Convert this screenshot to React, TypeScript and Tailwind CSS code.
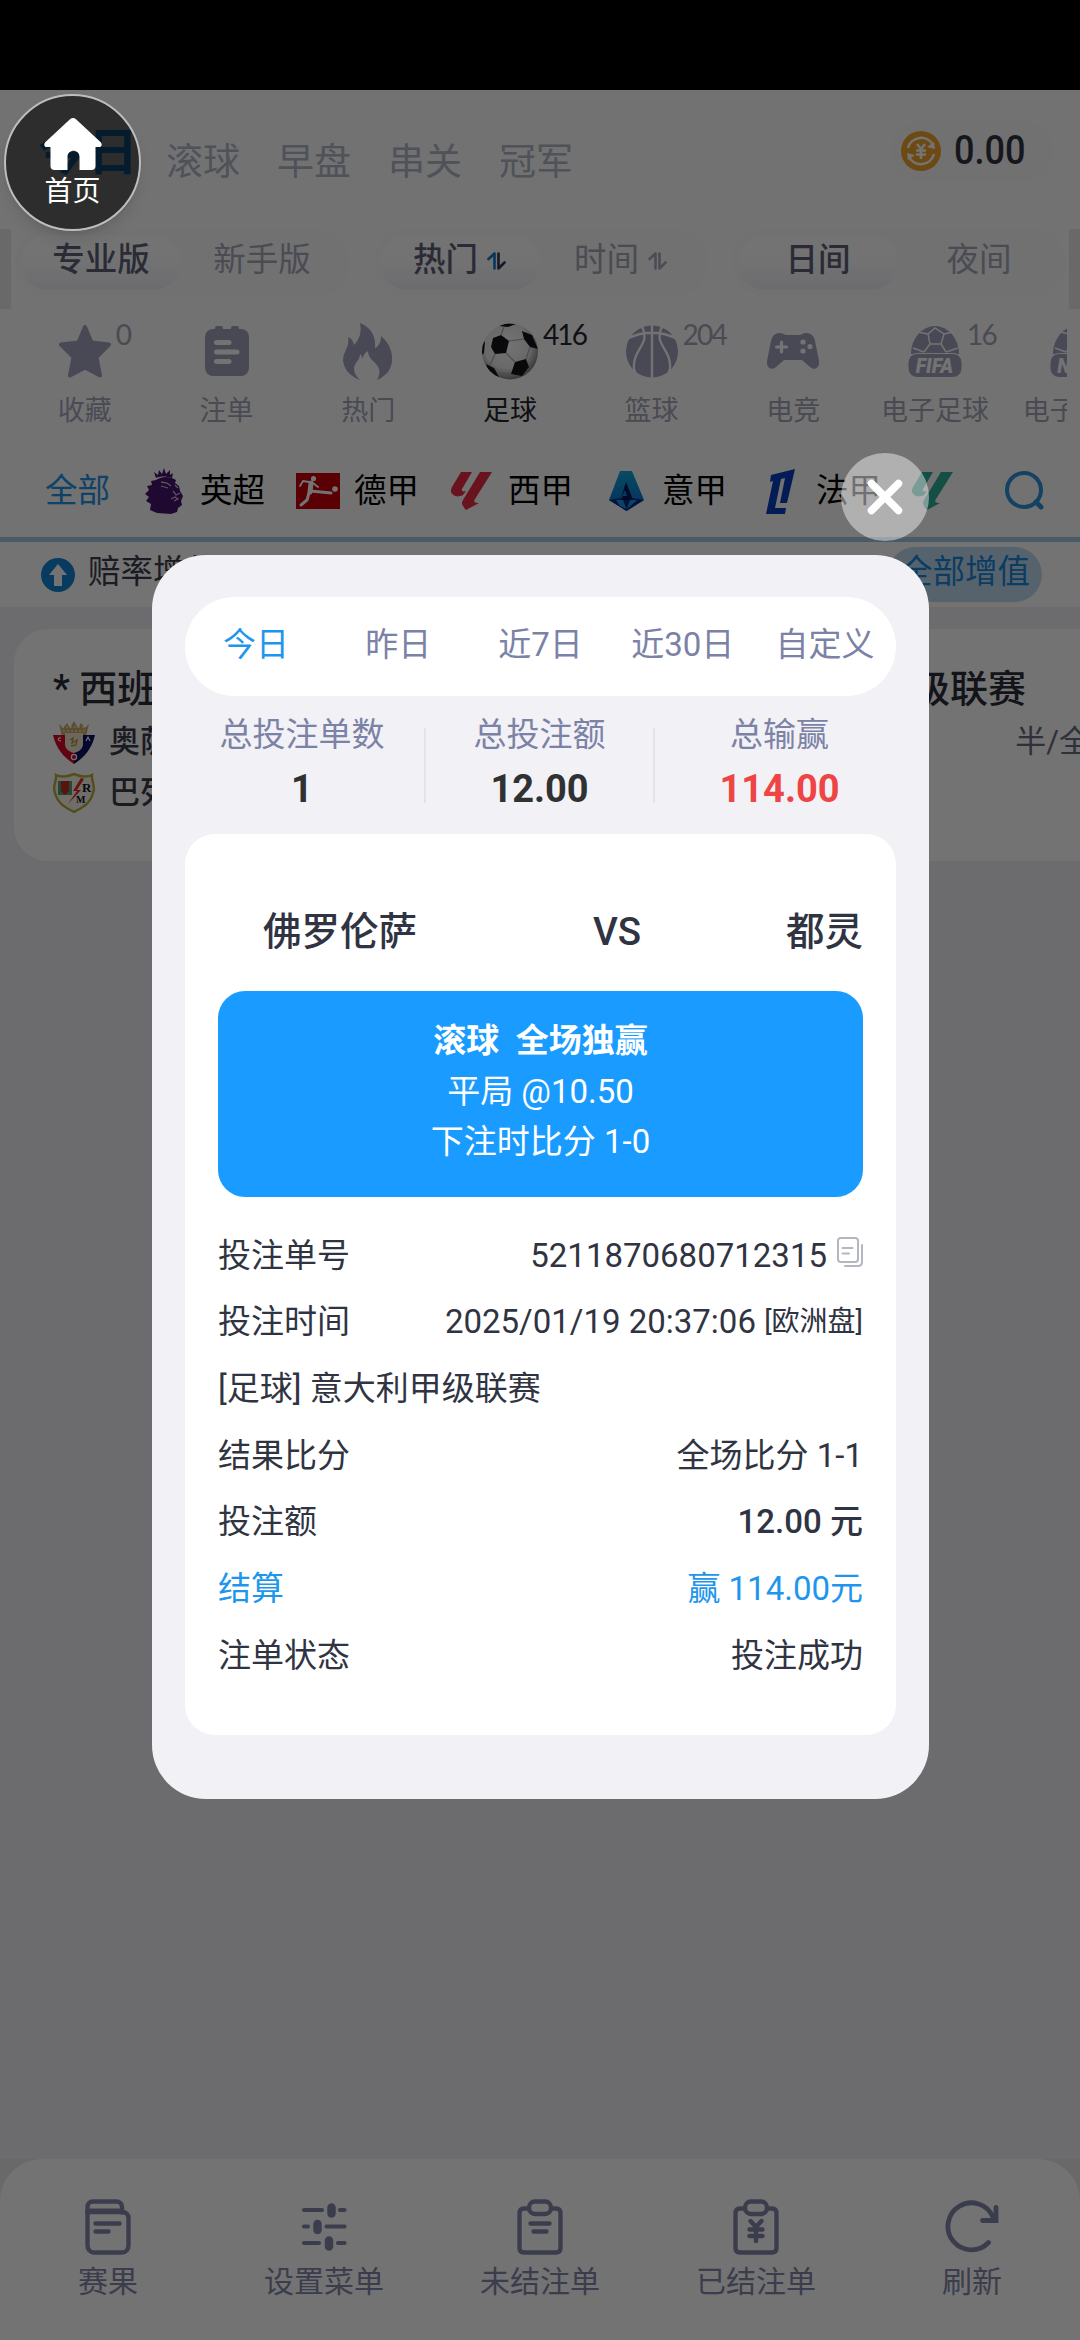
import React from 'react';
import clsx from 'clsx';

interface Sport {
  name: string;
  count?: string;
  active?: boolean;
  icon: React.ReactNode;
}

interface League {
  name: string;
  icon: React.ReactNode;
}

const StarIcon = () => (
  <svg width="52" height="54" viewBox="0 0 52 54" fill="#a0a2bb" stroke="#a0a2bb" strokeWidth="4" strokeLinejoin="round">
    <path d="M26 3 L32.5 18.5 L50 20.5 L37.5 33 L41 51.5 L26 43.5 L11 51.5 L14.5 33 L2 20.5 L19.5 18.5 Z" />
  </svg>
);

const NoteIcon = () => (
  <svg width="44" height="50" viewBox="0 0 44 50">
    <rect x="0" y="3" width="44" height="47" rx="8" fill="#a0a2bb" />
    <rect x="10" y="0" width="8" height="8" rx="2" fill="#a0a2bb" />
    <rect x="26" y="0" width="8" height="8" rx="2" fill="#a0a2bb" />
    <path d="M11.500 16.500 H24 M11.500 26 H32 M11.500 35.500 H24" stroke="#fff" strokeWidth="5" strokeLinecap="round" />
  </svg>
);

const FlameIcon = () => (
  <svg width="50" height="57" viewBox="0 0 50 57" fill="#a0a2bb">
    <path d="M17 0 C29 5 33 14 32 25 C36 23 38 19 38 13 C46 20 50 29 49 38 C48 47 43 53 34 57 C39 49 36 43 30 38 C27 35 25 32 25 28 C20 31 20 34 20 38 C20 35 19 33 17 31 C17 37 12 39 11 45 C11 50 13 53 17 57 C7 53 1 47 0 37 C0 28 7 25 5 14 C9 16 10 18 11 22 C16 17 19 10 17 0 Z" />
  </svg>
);

const SoccerIcon = () => (
  <svg width="56" height="57" viewBox="0 0 56 57">
    <defs>
      <radialGradient id="ball" cx="0.45" cy="0.4" r="0.62">
        <stop offset="0" stopColor="#fff" />
        <stop offset="0.65" stopColor="#e9e9e9" />
        <stop offset="1" stopColor="#777" />
      </radialGradient>
      <clipPath id="ballClip">
        <circle cx="28" cy="28.500" r="28" />
      </clipPath>
    </defs>
    <circle cx="28" cy="28.500" r="28" fill="url(#ball)" />
    <g clipPath="url(#ballClip)" fill="#15151a">
      <path d="M11 15 L19 12 L27 18 L24 30 L13 31 L9 24 Z" />
      <path d="M40 8 L50 12 L56 26 L48 24 L42 16 Z" />
      <path d="M33 39 L44 36 L47 44 L40 53 L29 51 Z" />
      <path d="M4 41 L12 45 L17 54 L8 52 Z" />
      <path d="M17 3 L25 0 L34 1 L26 4 Z" />
      <path d="M0 22 L3 18 L2 30 L0 32 Z" />
      <g stroke="#a9a9a9" strokeWidth="1.200" fill="none">
        <path d="M27 18 L42 16 M24 30 L33 39 M13 31 L8 42 M19 12 L22 4 M48 24 L44 36 M17 50 L29 51" />
      </g>
    </g>
  </svg>
);

const BasketballIcon = () => (
  <svg width="52" height="53" viewBox="0 0 52 53">
    <circle cx="26" cy="26.500" r="26" fill="#a0a2bb" />
    <path
      d="M26 0 V53 M15 0 C19 6 19 10 18 15 C15 25 7 29 8 44 L11 52 M37 0 C33 6 33 10 34 15 C37 25 45 29 44 44 L41 52 M3 13 C17 6 35 6 49 13"
      stroke="#fff"
      strokeWidth="2.400"
      fill="none"
    />
  </svg>
);

const GamepadIcon = () => (
  <svg width="52" height="36" viewBox="0 0 52 36">
    <path
      d="M13 0 C16 0 17 2 20 2 H32 C35 2 36 0 39 0 C44 0 47 3 48 8 L52 28 C53 35 47 38 43 34 L35 27 H17 L9 34 C5 38 -1 35 0 28 L4 8 C5 3 8 0 13 0 Z"
      fill="#a0a2bb"
    />
    <path d="M14.500 9 V19 M9.500 14 H19.500" stroke="#fff" strokeWidth="3.200" strokeLinecap="round" />
    <g fill="#fff">
      <circle cx="36" cy="9" r="2.600" />
      <circle cx="43" cy="13.500" r="2.600" />
      <circle cx="36" cy="18" r="2.600" />
    </g>
  </svg>
);

const FifaIcon = ({ label = 'FIFA' }: { label?: string }) => (
  <svg width="54" height="54" viewBox="0 0 54 54">
    <path d="M3 30 A24 28 0 0 1 51 30 Z" fill="#a0a2bb" />
    <path
      d="M27 4 L20 10 L22 20 H33 L36 10 Z M20 10 L10 8 M36 10 L45 8 M22 20 L16 28 M33 20 L38 28 M16 28 L5 24 M38 28 L50 24"
      stroke="#fff"
      strokeWidth="1.500"
      fill="none"
    />
    <rect x="0" y="29.500" width="54" height="24" rx="9" fill="#a0a2bb" stroke="#fff" strokeWidth="1" />
    <text x="26.500" y="48.500" textAnchor="middle" fontSize="19.500" fontWeight="900" fontStyle="italic" fill="#fff" className="font-[Roboto]">
      {label}
    </text>
  </svg>
);

const sports: Sport[] = [
  { name: '收藏', count: '0', icon: <StarIcon /> },
  { name: '注单', icon: <NoteIcon /> },
  { name: '热门', icon: <FlameIcon /> },
  { name: '足球', count: '416', active: true, icon: <SoccerIcon /> },
  { name: '篮球', count: '204', icon: <BasketballIcon /> },
  { name: '电竞', icon: <GamepadIcon /> },
  { name: '电子足球', count: '16', icon: <FifaIcon /> },
  { name: '电子篮球', icon: <FifaIcon label="NBA" /> },
];

const LionLogo = () => (
  <svg width="38" height="47" viewBox="0 0 38 47">
    <g fill="#48156e">
      <path d="M9 4 L13 7 L14 2 L17 6 L19 0 L21 6 L25 2 L25 7 L28 5 L27 10 C21 8 15 8 11 10 Z" />
      <path d="M11 12 C17 8 25 8 31 12 L30 15 L34 18 L35 23 L38 28 L36 33 L37 37 L33 40 L32 44 L26 46 L12 45 L5 42 L6 36 L1 33 L4 29 L0 26 L4 22 L2 18 L7 17 L6 13 Z" />
    </g>
    <path
      d="M16 14 L22 15 L26 18 M16 18 L23 20 M30 17 L33 20 M28 23 L31 27 L35 25 M26 31 L30 29 L33 31 L29 33"
      stroke="#c9bcd2"
      strokeWidth="1.300"
      fill="none"
    />
  </svg>
);

const BundesLogo = () => (
  <svg width="44" height="36" viewBox="0 0 44 36">
    <rect width="44" height="36" fill="#c8000b" />
    <g fill="none" stroke="#fff" strokeLinecap="round" strokeLinejoin="round">
      <path d="M15 10 L14 19" strokeWidth="5" />
      <path d="M14 18 L25 19 L35 20" strokeWidth="3" />
      <path d="M13 20 L11 27 L5 32" strokeWidth="3" />
      <path d="M13 9 L7 8 L4 13 M17 10 L22 14" strokeWidth="1.800" />
    </g>
    <circle cx="17.500" cy="5.500" r="2.600" fill="#fff" />
    <circle cx="39" cy="16" r="2.800" fill="#fff" />
  </svg>
);

const LaligaLogo = ({ color }: { color: string }) => (
  <svg width="42" height="38" viewBox="0 0 42 38" fill={color}>
    <path d="M10 0 H21 L11 17 C10 19 12 20 15 19 L12 23 C6 26 2 24 0 20 C0 18 0 17 1 15 Z" />
    <path d="M29 0 H41 L24 27 C22 30 24 31 28 31 L15 38 C13 36 12 34 11 32 C11 31 11 30 12 28 Z" />
  </svg>
);

const SerieALogo = () => (
  <svg width="35" height="40" viewBox="0 0 35 40">
    <defs>
      <linearGradient id="serie" x1="0" y1="0" x2="0" y2="1">
        <stop offset="0" stopColor="#14a5dc" />
        <stop offset="1" stopColor="#0869c8" />
      </linearGradient>
    </defs>
    <path d="M11 0 H23 L35 29 L17.500 40 L0 29 Z" fill="url(#serie)" />
    <path d="M0 29 L17.500 26 L35 29 L17.500 40 Z" fill="#0b2c86" />
    <path d="M7 29 L14 29 L17.500 38 L11 35 Z M21 29 H28 L18 38 Z" fill="#1a93e0" />
    <path d="M17 11 L24 29 H12 L14 25 H18 L16 19 L12 27 Z" fill="#06175a" />
  </svg>
);

const Ligue1Logo = () => (
  <svg width="29" height="45" viewBox="0 0 29 45" fill="#0a3fbe">
    <path d="M5 6 L29 0 L21 34 H14 L19 9 L15 10 L9 39 H20 L19 45 H0 L7 12 L4 13 Z" />
  </svg>
);

const leagues: League[] = [
  { name: '英超', icon: <LionLogo /> },
  { name: '德甲', icon: <BundesLogo /> },
  { name: '西甲', icon: <LaligaLogo color="#e82c44" /> },
  { name: '意甲', icon: <SerieALogo /> },
  { name: '法甲', icon: <Ligue1Logo /> },
];

const SortIcon = ({ active }: { active?: boolean }) => (
  <svg width="19" height="18" viewBox="0 0 19 18" fill="none" strokeWidth="2.600" strokeLinecap="round" strokeLinejoin="round" className="mt-[3px]">
    <path d="M1.500 7 L7.500 1.500 V16.500" stroke={active ? '#1478c8' : '#a9abba'} />
    <path d="M11.500 1.500 V16.500 L17.500 10.500" stroke={active ? '#33375a' : '#a9abba'} />
  </svg>
);

interface SegmentProps {
  on: string;
  off: string;
  sortable?: boolean;
}

const Segment: React.FC<SegmentProps> = ({ on, off, sortable }) => (
  <div className="flex h-[68px] w-[334px] rounded-full bg-[#fafafa] p-[6px] text-[32.500px] leading-[52px]">
    <div className="flex h-[55px] w-[160px] items-center justify-center gap-[9px] rounded-full bg-linear-to-b from-white via-[#fdfdff] to-[#eeeff6] pb-[6px] font-medium text-[#5f6078]">
      {on}
      {sortable && <SortIcon active />}
    </div>
    <div className="flex h-[55px] flex-1 items-center justify-center gap-[9px] pb-[6px] text-[#a4a7b8]">
      {off}
      {sortable && <SortIcon />}
    </div>
  </div>
);

const OsasunaCrest = () => (
  <svg width="42" height="43" viewBox="0 0 42 43">
    <path d="M6 3 L10 7 L14 2 L17 7 L21 0 L25 7 L28 2 L32 7 L36 3 L33 15 H9 Z" fill="#c9ad62" />
    <path d="M9 6 L33 6 M10 10 L32 10" stroke="#fff" strokeWidth="1" strokeDasharray="2 2" />
    <path d="M0 14 H21 V43 C10 36 3 27 0 14 Z" fill="#d80a24" />
    <path d="M42 14 H21 V43 C32 36 39 27 42 14 Z" fill="#0c1162" />
    <path d="M12 12 H30 V24 C29 29 25 31 21 32 C17 31 13 29 12 24 Z" fill="#efe6d2" />
    <path d="M17 19 L20 17 L19 22 L24 19 L23 24 L18 25" stroke="#c09346" strokeWidth="1.400" fill="none" />
    <path d="M8 17 C5 16 4 20 8 20 M33 20 L35 16 L37 20" stroke="#fff" strokeWidth="1.200" fill="none" />
    <circle cx="21" cy="36" r="2.600" fill="#d80a24" stroke="#fff" strokeWidth="1.200" />
  </svg>
);

const RayoCrest = () => (
  <svg width="42" height="40" viewBox="0 0 42 40">
    <path d="M3 2 C9 5 15 3 21 1 C27 3 33 5 39 2 C38 8 43 13 40 20 C37 31 30 34 21 39 C12 34 5 31 2 20 C-1 13 4 8 3 2 Z" fill="#f6f3e8" stroke="#b5aa3c" strokeWidth="2.400" />
    <rect x="5" y="8" width="14" height="14" fill="#549c7a" />
    <path d="M8 8 H16 V18 L12 22 L8 18 Z" fill="#c02f1e" />
    <path d="M28 5 L20 18 L24 18 L15 31 L28 17 L24 17 L31 6 Z" fill="#e22a28" />
    <text x="29" y="19" fontSize="13" fontWeight="700" fill="#15151a" className="font-['Liberation_Serif']">R</text>
    <text x="23" y="30" fontSize="10" fontWeight="700" fill="#15151a" className="font-['Liberation_Serif']">M</text>
  </svg>
);

const ResultIcon = () => (
  <svg width="46" height="56" viewBox="0 0 46 56" fill="none" stroke="#8388ac" strokeWidth="4.400" strokeLinecap="round">
    <path d="M2.500 14 V8 C2.500 4.500 5 2.500 8 2.500 H31 C35 2.500 37 5 37 8 V13.500" />
    <path d="M3 13 H37 C41 13 43.500 15.500 43.500 19 V46 C43.500 50.500 41 53.500 37 53.500 H9 C5 53.500 2.500 50.500 2.500 46 V13" />
    <path d="M10.500 24.500 H34.500 M10.500 32.500 H23.500" />
    <path d="M3 12 H37" strokeWidth="5" />
  </svg>
);

const SettingsIcon = () => (
  <svg width="46" height="56" viewBox="0 0 46 56" stroke="#8388ac" strokeLinecap="round">
    <path d="M3 11 H21 M39 11 H43.500 M3 27.500 H7 M25.500 27.500 H43.500 M3 44 H18 M37 44 H43.500" strokeWidth="4.200" />
    <path d="M30.500 8.500 V14.500 M16.500 25 V31 M28 41.500 V47.500" strokeWidth="8.500" />
  </svg>
);

const ClipboardIcon = ({ yen }: { yen?: boolean }) => (
  <svg width="46" height="56" viewBox="0 0 46 56" fill="none" stroke="#8388ac" strokeWidth="4.400" strokeLinecap="round" strokeLinejoin="round">
    <path d="M12 9.500 H7 C4 9.500 2.500 11 2.500 14 V49 C2.500 52 4 53.500 7 53.500 H39 C42 53.500 43.500 52 43.500 49 V14 C43.500 11 42 9.500 39 9.500 H34" />
    <rect x="12" y="2.500" width="22" height="12.500" rx="6" />
    {yen ? <path d="M17.500 22 L23 28 L28.500 22 M16.500 30.500 H29.500 M16.500 37 H29.500 M23 28 V42" /> : <path d="M13.500 24.500 H32.500 M16.500 32.500 H29.500" />}
  </svg>
);

const RefreshIcon = () => (
  <svg width="54" height="56" viewBox="0 0 54 56" fill="none" stroke="#8388ac" strokeWidth="4.800" strokeLinecap="round">
    <path d="M43.500 43.500 A23.500 23.500 0 1 1 48 18" />
    <path d="M51 8.500 V21.500 H37.500" />
  </svg>
);

const footerItems = [
  { name: '赛果', icon: <ResultIcon /> },
  { name: '设置菜单', icon: <SettingsIcon /> },
  { name: '未结注单', icon: <ClipboardIcon /> },
  { name: '已结注单', icon: <ClipboardIcon yen /> },
  { name: '刷新', icon: <RefreshIcon /> },
];

const CopyIcon = () => (
  <svg width="26" height="30" viewBox="0 0 26 30" fill="none" stroke="#b4b6c0" strokeWidth="2" strokeLinecap="round">
    <rect x="1" y="1" width="20" height="24" rx="3" />
    <path d="M25 8 V25 C25 27.500 24 29 21 29 H8 M5.500 11 H15.500 M5.500 16.500 H12" />
  </svg>
);

const Header = () => (
  <header className="flex h-[139px] items-center justify-between pr-[27px] pl-[38px]">
    <nav className="flex items-center gap-[37px] pt-[7px] text-[37px] text-[#b2b5c6]">
      <span className="mr-[-9px] -mt-[20px] text-[50px] font-bold text-[#179cff]">今日</span>
      <span>滚球</span>
      <span>早盘</span>
      <span>串关</span>
      <span>冠军</span>
    </nav>
    <div className="mb-[17px] flex h-[60px] w-[162px] items-center gap-[13px] rounded-full bg-[#fafafa] pl-[10px]">
      <svg width="40" height="40" viewBox="0 0 40 40">
        <circle cx="20" cy="20" r="20" fill="#f2a42c" />
        <path d="M7 17 A13.500 13.500 0 0 1 32 14 M33 23 A13.500 13.500 0 0 1 8 26" stroke="#fff" strokeWidth="2.600" fill="none" />
        <path d="M34 18 L26 16 L33 11 Z M6 22 L14 24 L7 29 Z" fill="#fff" />
        <path d="M16 13 L20 18 L24 13 M15 19.500 H25 M15 23.500 H25 M20 18 V28" stroke="#fff" strokeWidth="2.600" fill="none" />
      </svg>
      <span className="origin-left scale-x-[0.88] text-[41px] font-medium text-[#303442]">0.00</span>
    </div>
  </header>
);

const SportsBar = () => (
  <div className="mr-[13px] ml-[14px] flex h-[118px] overflow-hidden pt-[3px]">
    {sports.map((sport) => (
      <div
        key={sport.name}
        className={clsx('flex w-[141.700px] shrink-0 flex-col items-center text-[27px]', sport.active ? 'text-[#25262e]' : 'text-[#a4a6b6]')}
      >
        <div className="relative flex h-[60px] items-center">
          {sport.icon}
          {sport.count && (
            <span className="absolute top-[-2px] left-full ml-[5px] font-[Lato] text-[28px] leading-[30px] tracking-[-1.800px]">{sport.count}</span>
          )}
        </div>
        <span className="mt-[10px] leading-[40px] whitespace-nowrap">{sport.name}</span>
      </div>
    ))}
  </div>
);

const LeagueBar = () => (
  <div className="flex h-[97px] items-center justify-between border-b-[5px] border-[#a4cae5] pl-[45px] text-[32.500px] text-black">
    <div className="flex items-center">
      <span className="w-[97px] text-[#2592e6]">全部</span>
      {leagues.map((league) => (
        <div key={league.name} className="flex items-center">
          <span className="flex w-[44px] justify-center">{league.icon}</span>
          <span className="mr-[31px] ml-[14px]">{league.name}</span>
        </div>
      ))}
      <LaligaLogo color="#2fae98" />
    </div>
    <div className="flex h-full w-[98px] items-center pl-[23px]">
      <svg width="40" height="40" viewBox="0 0 40 40" fill="none" stroke="#2b93dc" strokeWidth="4" strokeLinecap="round">
        <circle cx="19" cy="19" r="17" />
        <path d="M31 31 L36 36" strokeWidth="5" />
      </svg>
    </div>
  </div>
);

const OddsBar = () => (
  <div className="flex h-[65px] items-center justify-between bg-white pr-[38px] pl-[41px] text-[32.500px]">
    <div className="flex items-center gap-[13px] text-[#3c3e4c]">
      <svg width="34" height="34" viewBox="0 0 34 34">
        <circle cx="17" cy="17" r="17" fill="#1584d6" />
        <path d="M17 6 L26 17 H21 V28 H13 V17 H8 Z" fill="#fff" />
      </svg>
      <span className="-mt-[5px]">赔率增值</span>
    </div>
    <div className="-mt-[1px] flex h-[55px] items-center rounded-full bg-[#bfdcf2] px-[12px] leading-[48px] text-[#1a86da]">
      <span className="-mt-[5px]">全部增值</span>
    </div>
  </div>
);

const MatchCard = () => (
  <div className="mt-[22px] ml-[14px] h-[232px] overflow-hidden rounded-l-[34px] bg-white pt-[33px] pl-[39px] text-[#3a3c4a]">
    <div className="flex h-[54px] items-center justify-between pr-[54px] text-[38px] font-medium text-[#2c2e3a]">
      <span>* 西班牙</span>
      <span>甲级联赛</span>
    </div>
    <div className="flex h-[52px] items-center justify-between text-[31px]">
      <div className="flex items-center gap-[14px]">
        <OsasunaCrest />
        <span className="font-medium">奥萨苏纳</span>
      </div>
      <span className="mr-[-41px] whitespace-nowrap text-[#6a6c82]">半/全场</span>
    </div>
    <div className="flex h-[50px] items-center gap-[14px] text-[31px]">
      <RayoCrest />
      <span className="font-medium">巴列卡诺</span>
    </div>
  </div>
);

const Footer = () => (
  <div className="bg-[#e9e9e9]">
    <footer className="grid h-[181px] grid-cols-5 rounded-t-[42px] bg-white pt-[40px] text-[30px] text-[#8388ac]">
      {footerItems.map((item) => (
        <div key={item.name} className="flex flex-col items-center">
          {item.icon}
          <span className="mt-[5px] leading-[44px]">{item.name}</span>
        </div>
      ))}
    </footer>
  </div>
);

const tabs = ['今日', '昨日', '近7日', '近30日', '自定义'];

const stats = [
  { label: '总投注单数', value: '1', width: 'w-[241px]', inset: 'pr-[5px]' },
  { label: '总投注额', value: '12.00', width: 'w-[229px]', inset: '' },
  { label: '总输赢', value: '114.00', width: 'flex-1 text-[#ef4444]', inset: 'pl-[8px]' },
];

const Row = ({ label, className, children }: { label: string; className?: string; children?: React.ReactNode }) => (
  <div className={clsx('flex h-[66.700px] items-center justify-between', className)}>
    <span>{label}</span>
    <span className="flex items-center whitespace-pre">{children}</span>
  </div>
);

const BetModal = () => (
  <div className="absolute top-[555px] left-[152px] h-[1244px] w-[777px] rounded-[54px] bg-[#f1f1f6] px-[33px] pt-[42px]">
    <div className="grid h-[99px] grid-cols-5 rounded-full bg-white text-center text-[33px] leading-[95px] text-[#7c82a6]">
      {tabs.map((tab, index) => (
        <span key={tab} className={index === 0 ? 'text-[#1e96ee]' : ''}>{tab}</span>
      ))}
    </div>

    <div className="flex h-[138px] text-center">
      {stats.map((stat, index) => (
        <div key={stat.label} className={clsx('flex', stat.width)}>
          <div className={clsx('flex-1 pt-[15px]', stat.inset)}>
            <div className="text-[33px] leading-[48px] text-[#7c82a6]">{stat.label}</div>
            <div className={clsx('mt-[6px] text-[38px] leading-[48px] font-bold', index < 2 && 'text-[#303133]')}>{stat.value}</div>
          </div>
          {index < 2 && <div className="mt-[32px] h-[75px] w-[2px] bg-[#e3e4ea]" />}
        </div>
      ))}
    </div>

    <div className="h-[901px] rounded-[30px] bg-white px-[33px] text-[#303442]">
      <div className="flex h-[157px] items-end justify-between pb-[31px] pl-[45px] text-[38.500px] leading-[56px] font-medium">
        <span>佛罗伦萨</span>
        <span className="ml-[31px]">VS</span>
        <span>都灵</span>
      </div>
      <div className="flex h-[206px] flex-col rounded-[27px] bg-[#1a9bff] pt-[25px] text-center text-[33px] leading-[50.500px] text-white">
        <span className="font-bold whitespace-pre">滚球  全场独赢</span>
        <span>平局 @10.50</span>
        <span>下注时比分 1-0</span>
      </div>
      <div className="mt-[25px] text-[33px]">
        <Row label="投注单号">
          5211870680712315
          <span className="mb-[7px] ml-[10px]"><CopyIcon /></span>
        </Row>
        <Row label="投注时间">
          2025/01/19 20:37:06 <span className="text-[28px]">[欧洲盘]</span>
        </Row>
        <Row label="[足球] 意大利甲级联赛" />
        <Row label="结果比分">全场比分 1-1</Row>
        <Row label="投注额"><span className="font-medium">12.00 元</span></Row>
        <Row label="结算" className="text-[#1e96ee]">赢 114.00元</Row>
        <Row label="注单状态">投注成功</Row>
      </div>
    </div>

    <button className="absolute top-[-102px] right-0 flex size-[88px] items-center justify-center rounded-full bg-white/44">
      <svg width="36" height="36" viewBox="0 0 36 36" stroke="#fff" strokeWidth="7.500" strokeLinecap="round">
        <path d="M4.500 4.500 L31.500 31.500 M31.500 4.500 L4.500 31.500" />
      </svg>
    </button>
  </div>
);

const HomeButton = () => (
  <button className="absolute top-[94px] left-[4px] flex size-[137px] flex-col items-center rounded-full border-2 border-[#bdbdbd] bg-black/60 pt-[22px] shadow-lg">
    <svg width="58" height="52" viewBox="0 0 58 52" fill="#fff">
      <path d="M26 1.200 C28 -0.300 30 -0.300 32 1.200 L57 24.500 C58.500 27 57.500 29 55 29 H51.500 V48 C51.500 50.500 50 52 47.500 52 H35.500 V39 C35.500 30.500 23.500 30.500 23.500 39 V52 H10.500 C8 52 6.500 50.500 6.500 48 V29 H3 C0.500 29 -0.500 27 1 24.500 Z" />
    </svg>
    <span className="mt-[2px] text-[28px] leading-[40px] text-white">首页</span>
  </button>
);

const App: React.FC = () => {
  return (
    <div className="relative flex h-[2340px] w-[1080px] flex-col overflow-hidden bg-[#f0f0f5] font-[Roboto,'Noto_Sans_CJK_SC',sans-serif]">
      <div className="h-[90px] shrink-0 bg-black" />
      <div className="bg-[#fdfdfd]">
        <Header />
        <div className="flex h-[80px] justify-between border-x-[11px] border-[#e8e8e8] pr-[3px] pl-[4px]">
          <Segment on="专业版" off="新手版" />
          <Segment on="热门" off="时间" sortable />
          <Segment on="日间" off="夜间" />
        </div>
        <div className="h-[9px]" />
        <SportsBar />
        <div className="h-[9px]" />
        <LeagueBar />
      </div>
      <OddsBar />
      <MatchCard />
      <div className="mt-auto">
        <Footer />
      </div>

      <div className="absolute inset-x-0 top-[90px] bottom-0 bg-black/55" />
      <BetModal />
      <HomeButton />
    </div>
  );
};

export default App;
